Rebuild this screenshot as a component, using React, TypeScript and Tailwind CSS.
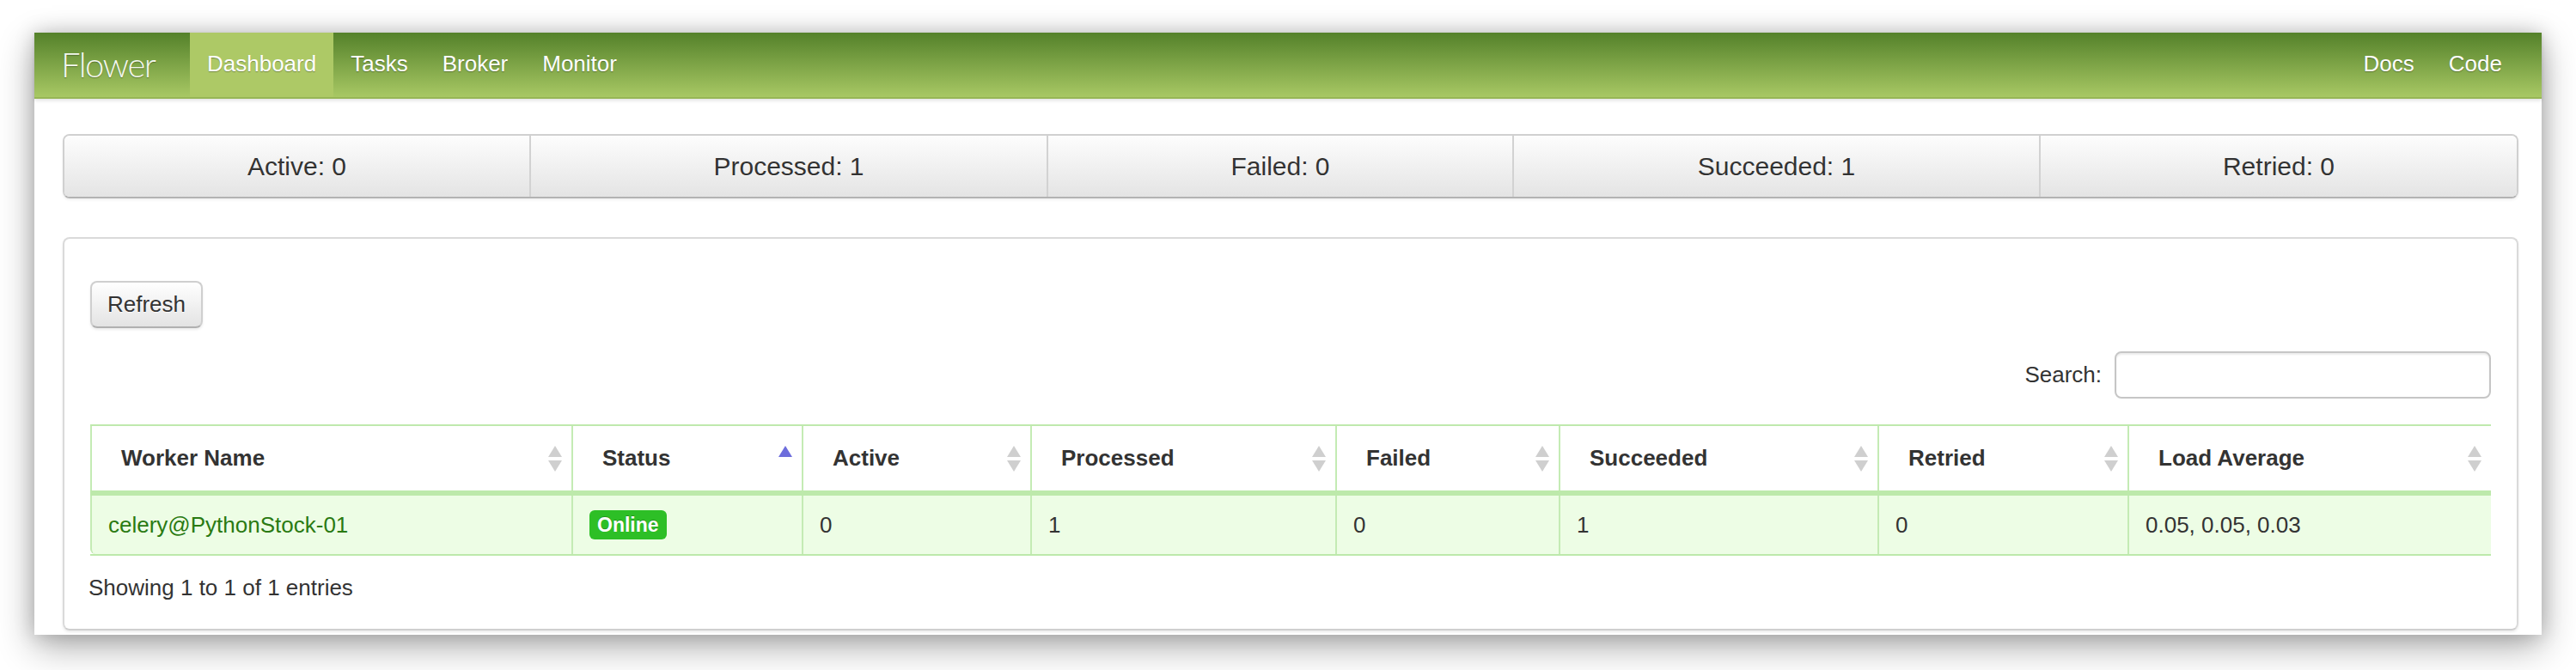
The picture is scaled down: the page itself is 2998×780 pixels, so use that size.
import React from "react";

const font = "font-['Liberation_Sans',Arial,sans-serif]";

function SortIcon({ active }: { active?: boolean }) {
  if (active) {
    return (
      <svg width="16" height="30" viewBox="0 0 16 30" className="shrink-0">
        <polygon points="8,0 16,13 0,13" fill="#6d6ddc" />
      </svg>
    );
  }
  return (
    <svg width="16" height="30" viewBox="0 0 16 30" className="shrink-0">
      <polygon points="8,0 16,13 0,13" fill="#cfcfcf" />
      <polygon points="0,17 16,17 8,30" fill="#cfcfcf" />
    </svg>
  );
}

const cols = [
  { name: "Worker Name", w: 560 },
  { name: "Status", w: 268, active: true },
  { name: "Active", w: 266 },
  { name: "Processed", w: 355 },
  { name: "Failed", w: 260 },
  { name: "Succeeded", w: 371 },
  { name: "Retried", w: 291 },
  { name: "Load Average", w: 423 },
];

const stats = [
  { label: "Active: 0", w: 543 },
  { label: "Processed: 1", w: 602 },
  { label: "Failed: 0", w: 542 },
  { label: "Succeeded: 1", w: 613 },
  { label: "Retried: 0", w: 558 },
];

export default function App() {
  return (
    <div className={`w-[2998px] h-[780px] bg-white pt-[38px] pl-[40px] ${font}`}>
      <div className="w-[2918px] h-[701px] bg-white flex flex-col shadow-[0_14px_40px_rgba(0,0,0,0.32),0_0_22px_rgba(0,0,0,0.18)]">
        {/* Navbar */}
        <div className="h-[77px] flex items-stretch bg-[linear-gradient(to_bottom,#54812a,#a8c864)] border-b-2 border-[#97b656] shadow-[0_2px_4px_rgba(0,0,0,0.12)] pr-[26px] text-white [text-shadow:0_1px_1px_rgba(0,0,0,0.3)]">
          <div className="w-[181px] pl-[31px] flex items-center pb-[2px] font-['Lato',sans-serif] font-light text-[40px] tracking-[-1.5px] text-[#f4f8ee]">
            Flower
          </div>
          <div className="px-[20px] flex items-center pb-[3px] text-[26px] bg-[#adc966]">Dashboard</div>
          <div className="px-[20px] flex items-center pb-[3px] text-[26px]">Tasks</div>
          <div className="px-[20px] flex items-center pb-[3px] text-[26px]">Broker</div>
          <div className="px-[20px] flex items-center pb-[3px] text-[26px]">Monitor</div>
          <div className="flex-1" />
          <div className="px-[20px] flex items-center pb-[3px] text-[26px]">Docs</div>
          <div className="px-[20px] flex items-center pb-[3px] text-[26px]">Code</div>
        </div>

        <div className="pl-[33px] pr-[27px]">
          {/* Stats bar */}
          <div className="mt-[41px] h-[75px] flex rounded-[8px] border-2 border-[#d0d0d0] border-b-[#b3b3b3] overflow-hidden shadow-[0_2px_3px_rgba(0,0,0,0.06)]">
            {stats.map((s, i) => (
              <div
                key={s.label}
                style={{ width: s.w - (i === 0 ? 2 : 0) - (i === stats.length - 1 ? 2 : 0) }}
                className={`flex items-center justify-center text-[30px] text-[#333] bg-[linear-gradient(to_bottom,#fdfdfd,#e4e4e4)] [text-shadow:0_1px_1px_rgba(255,255,255,0.75)] ${i > 0 ? "border-l-2 border-[#d2d2d2]" : ""}`}
              >
                {s.label}
              </div>
            ))}
          </div>

          {/* Panel */}
          <div className="mt-[45px] h-[458px] rounded-[8px] border-2 border-[#dadada] border-b-[#cfcfcf] shadow-[0_2px_3px_rgba(0,0,0,0.08)] px-[30px] pt-[49px]">
            <button className="w-[131px] h-[55px] rounded-[8px] border-2 border-[#cfcfcf] border-b-[#b0b0b0] bg-[linear-gradient(to_bottom,#ffffff,#e3e3e3)] text-[26px] text-[#333] flex items-center justify-center [text-shadow:0_1px_1px_rgba(255,255,255,0.75)] shadow-[0_2px_3px_rgba(0,0,0,0.08)]">
              Refresh
            </button>

            <div className="mt-[27px] flex justify-end items-center gap-[15px]">
              <span className="text-[26px] text-[#333]">Search:</span>
              <div className="w-[438px] h-[55px] rounded-[8px] border-2 border-[#c6c6c6] bg-white shadow-[inset_0_2px_2px_rgba(0,0,0,0.08)]" />
            </div>

            {/* Table */}
            <div className="mt-[30px] w-[2794px]">
              <div className="flex h-[77px] border-t-2 border-[#bfe9ad]">
                {cols.map((c) => (
                  <div
                    key={c.name}
                    style={{ width: c.w }}
                    className="border-l-2 border-[#c4ebb4] bg-white flex items-center justify-between pl-[34px] pr-[11px] text-[26px] font-bold text-[#333]"
                  >
                    <span>{c.name}</span>
                    <SortIcon active={c.active} />
                  </div>
                ))}
              </div>
              <div className="h-[6px] bg-[#bde9ab]" />
              <div className="flex h-[70px] border-b-2 border-[#bde9ab]">
                {[
                  <span className="text-[#2a7a12]">celery@PythonStock-01</span>,
                  <span className="inline-flex items-center h-[34px] px-[9px] rounded-[6px] bg-[#2dbf26] text-white font-bold text-[23px] [text-shadow:0_-1px_0_rgba(0,0,0,0.25)]">Online</span>,
                  "0",
                  "1",
                  "0",
                  "1",
                  "0",
                  "0.05, 0.05, 0.03",
                ].map((v, i) => (
                  <div
                    key={i}
                    style={{ width: cols[i].w }}
                    className={`border-l-2 border-[#c4ebb4] bg-[#edfde5] flex items-center pl-[19px] text-[26px] text-[#333] ${i === 0 ? "rounded-bl-[6px]" : ""}`}
                  >
                    {v}
                  </div>
                ))}
              </div>
            </div>

            <div className="mt-[19px] text-[26px] leading-[36px] text-[#333] -ml-[2px]">Showing 1 to 1 of 1 entries</div>
          </div>
        </div>
      </div>
    </div>
  );
}
